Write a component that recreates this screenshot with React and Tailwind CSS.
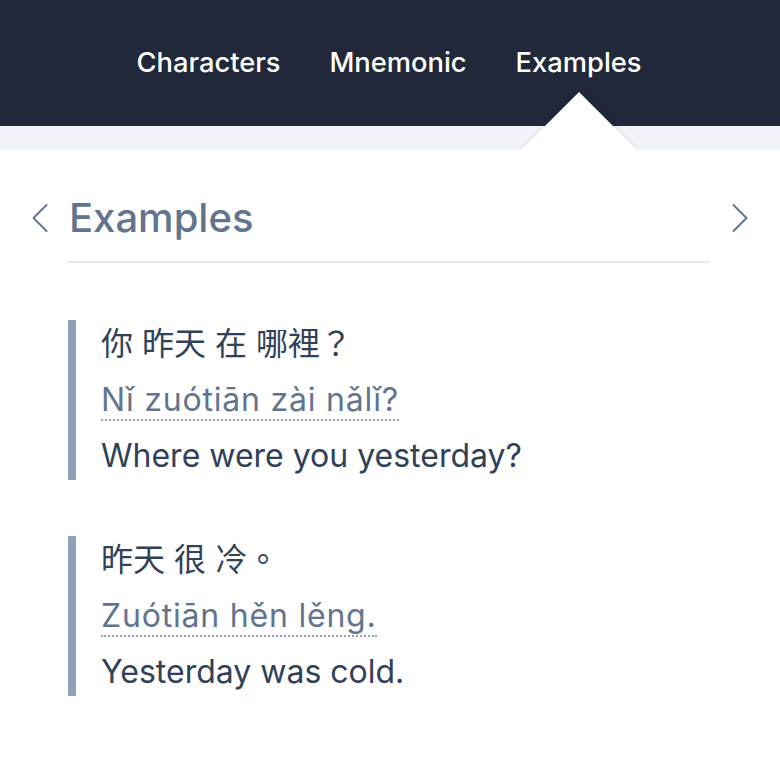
import React from "react";

const examples = [
  {
    hanzi: "你 昨天 在 哪裡？",
    pinyin: "Nǐ zuótiān zài nǎlǐ?",
    english: "Where were you yesterday?",
  },
  {
    hanzi: "昨天 很 冷。",
    pinyin: "Zuótiān hěn lěng.",
    english: "Yesterday was cold.",
  },
];

function Chevron({ dir }) {
  return (
    <svg width="16" height="30" viewBox="0 0 16 30" fill="none" className="text-slate-500 shrink-0">
      {dir === "left" ? (
        <polyline points="14.5,2 1.5,15 14.5,28" stroke="currentColor" strokeWidth="2" strokeLinecap="round" strokeLinejoin="round" />
      ) : (
        <polyline points="1.5,2 14.5,15 1.5,28" stroke="currentColor" strokeWidth="2" strokeLinecap="round" strokeLinejoin="round" />
      )}
    </svg>
  );
}

export default function App() {
  return (
    <div className="min-h-[760px] bg-white" style={{ fontFamily: 'Inter, "Noto Sans CJK TC", sans-serif' }}>
      {/* Top nav */}
      <header className="h-[126px] bg-[#212839]">
        <nav className="flex justify-center gap-[49px] pt-[44px] pr-[2px]">
          <span className="text-[27.3px] font-medium text-white leading-[38px]">Characters</span>
          <span className="text-[27.3px] font-medium text-white leading-[38px]">Mnemonic</span>
          <span className="relative text-[27.3px] font-medium text-white leading-[38px]">
            Examples
            {/* pointer */}
            <span className="absolute left-1/2 top-[65px] h-[82px] w-[82px] -translate-x-1/2 rotate-45 bg-white shadow-[0_0_6px_rgba(15,23,42,0.12)]" />
          </span>
        </nav>
      </header>

      <div className="h-[24px] bg-slate-100" />

      {/* Card */}
      <main className="relative z-10 bg-white pt-[44px]">
        <div className="flex items-center gap-[21px] px-[32px]">
          <Chevron dir="left" />
          <h1 className="flex-1 text-[40px] font-medium leading-[48px] text-slate-500">Examples</h1>
          <Chevron dir="right" />
        </div>
        <div className="ml-[68px] mr-[70px] mt-[19px] h-[2px] bg-slate-200" />

        <div className="ml-[68px] mr-[70px] mt-[57px] flex flex-col gap-[56px]">
          {examples.map((ex) => (
            <div key={ex.english} className="flex flex-col gap-[8px] border-l-8 border-slate-400 pl-[25px]">
              <p className="text-[32px] leading-[48px] text-slate-700">{ex.hanzi}</p>
              <p className="text-[32px] leading-[48px] tracking-wide text-slate-500">
                <span className="border-b-2 border-dotted border-slate-400">{ex.pinyin}</span>
              </p>
              <p className="text-[32px] leading-[48px] text-slate-700">{ex.english}</p>
            </div>
          ))}
        </div>
      </main>
    </div>
  );
}
